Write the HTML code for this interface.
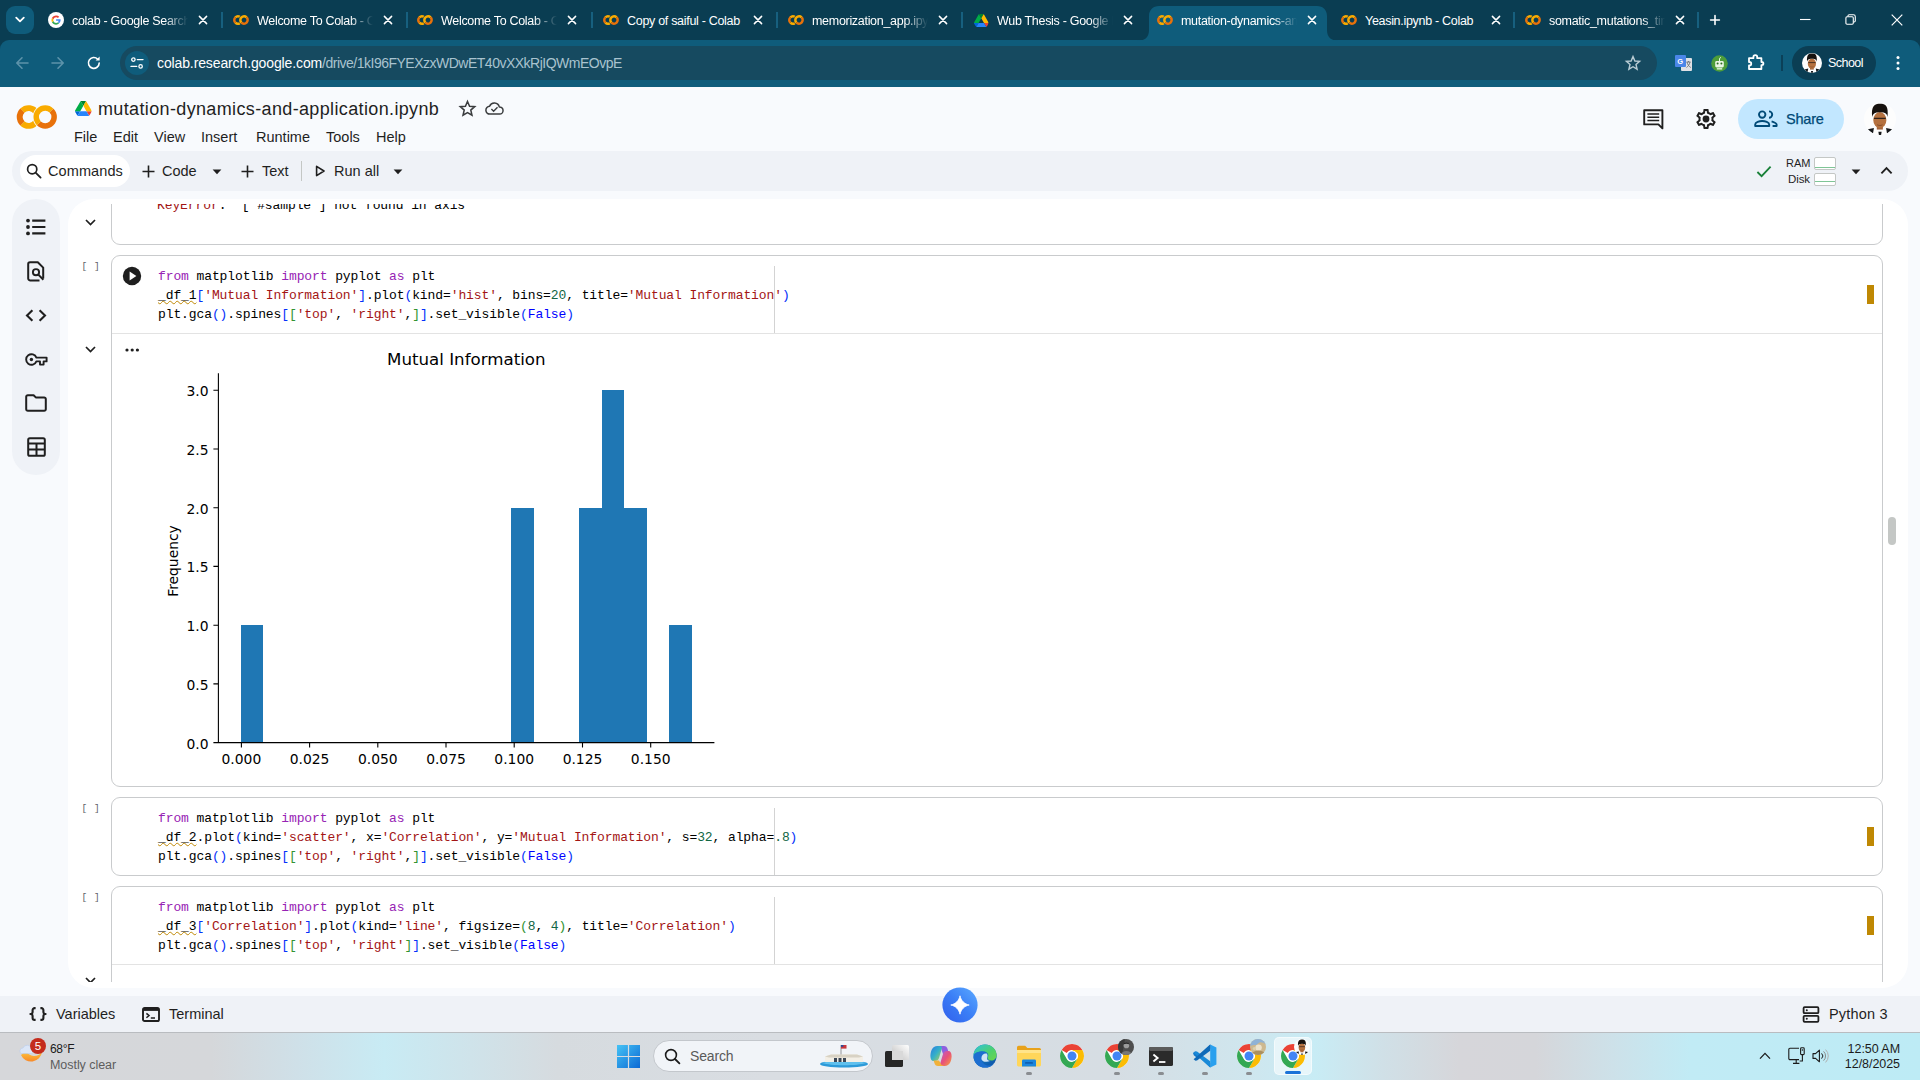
<!DOCTYPE html>
<html lang="en">
<head>
<meta charset="utf-8">
<title>mutation-dynamics-and-application.ipynb - Colab</title>
<style>
*{box-sizing:border-box;margin:0;padding:0}
html,body{width:1920px;height:1080px;overflow:hidden}
body{position:relative;background:#f8fafd;font-family:"Liberation Sans",sans-serif;color:#1f1f1f}
.abs{position:absolute}
svg{display:block;overflow:visible}
/* ---------- browser chrome ---------- */
#tabstrip{position:absolute;left:0;top:0;width:1920px;height:60px;background:#0a3d52}
#navbar{position:absolute;left:0;top:40px;width:1920px;height:47px;background:#0f5c7b;border-radius:9px 9px 0 0}
.tab{position:absolute;top:0;height:40px;color:#fff;font-size:12.5px;letter-spacing:-0.3px}
.tab .fav{position:absolute;left:11px;top:12px;width:16px;height:16px}
.tab .tt{position:absolute;left:35px;top:13px;width:116px;height:16px;line-height:16px;white-space:nowrap;overflow:hidden;
  -webkit-mask-image:linear-gradient(90deg,#000 80%,transparent 100%);mask-image:linear-gradient(90deg,#000 80%,transparent 100%)}
.tab .x{position:absolute;left:160px;top:14px;width:12px;height:12px}
.tsep{position:absolute;top:12px;width:1.5px;height:16px;background:#17607f}
#omni{position:absolute;left:120px;top:46px;width:1537px;height:34px;border-radius:17px;background:#164a60}
#url{position:absolute;left:157px;top:54px;font-size:14px;line-height:18px;white-space:nowrap;color:#fff}
#url .p{color:#a9c3cf}
/* ---------- colab ---------- */
.menu{position:absolute;top:128px;font-size:14.5px;line-height:18px;color:#1f1f1f;white-space:nowrap}
#doctitle{position:absolute;left:98px;top:98px;font-size:18px;line-height:22px;letter-spacing:.36px;white-space:nowrap;color:#1f1f1f}
#ctool{position:absolute;left:12px;top:151px;width:1896px;height:40px;border-radius:20px;background:#eff2f7}
.tbtxt{position:absolute;font-size:14.5px;line-height:18px;top:162px;white-space:nowrap;color:#1f1f1f}
#side{position:absolute;left:12px;top:199px;width:48px;height:276px;border-radius:24px;background:#eff2f7}
#nb{position:absolute;left:68px;top:199px;width:1840px;height:789px;border-radius:26px;background:#fff;overflow:hidden}
#scroll{position:absolute;left:0;top:5px;width:1840px;height:778px;overflow:hidden}
.cell{position:absolute;left:43px;width:1772px;border:1px solid #c9cbcd;border-radius:9px;background:#fff}
.code{position:absolute;left:90px;font-family:"Liberation Mono",monospace;font-size:13px;letter-spacing:-0.1px;line-height:19px;white-space:pre;color:#000}
.k{color:#9723b4}.s{color:#a31515}.n{color:#116644}.b1{color:#0431fa}.b2{color:#319331}.b3{color:#7b3814}.f{color:#0000ff}
.sq{text-decoration:underline wavy #bf8803;text-decoration-thickness:1px;text-underline-offset:1px;text-decoration-skip-ink:none}
.ruler{position:absolute;left:706px;width:1px;background:#d3d3d3}
.mark{position:absolute;left:1799px;width:7px;height:19px;background:#bf8803}
.cnt{position:absolute;left:13.5px;font-family:"Liberation Mono",monospace;font-size:9.5px;letter-spacing:.5px;color:#5f6368;white-space:pre;margin-top:2px}
.hr{position:absolute;left:44px;width:1770px;height:1px;background:#e3e3e3}
/* chart */
.mt{font-family:"DejaVu Sans",sans-serif;fill:#000}
/* bottom */
#bbar{position:absolute;left:0;top:996px;width:1920px;height:36px;background:#eff2f7}
#task{position:absolute;left:0;top:1032px;width:1920px;height:48px;
 background:linear-gradient(90deg,#d6d7da 0%,#d5d7da 11%,#cfe0e8 15.5%,#c8ebf4 20%,#cfe3ea 24.5%,#d6dbdf 29%,#d9dde2 40%,#d6dde3 58%,#cfe6ee 65%,#c8ecf5 68.5%,#d0e0e7 72%,#d6d6da 76%,#d5d6da 80%,#cde1e9 84%,#c1ebf5 88%,#bdebf5 100%);border-top:1px solid #b9bcc0}
.tk{position:absolute;font-size:12px;line-height:15px;white-space:nowrap;color:#1b1b1b}
</style>
</head>
<body>
<!-- TABSTRIP -->
<div id="tabstrip"></div>
<div id="navbar"></div>
<!--CHROME_START-->
<!-- tab search -->
<div class="abs" style="left:6px;top:6px;width:28px;height:28px;border-radius:9px;background:#0f5c7b"></div>
<svg class="abs" style="left:14px;top:15px" width="12" height="10" viewBox="0 0 12 10"><path d="M2.2 2.6 L6 6.4 L9.8 2.6" fill="none" stroke="#fff" stroke-width="1.8" stroke-linecap="round" stroke-linejoin="round"/></svg>
<!-- active tab shape -->
<svg class="abs" style="left:1137px;top:6px" width="202" height="35" viewBox="0 0 202 35"><path d="M0 35 C8 35 12 31 12 24 V10 C12 4 16 0 22 0 H180 C186 0 190 4 190 10 V24 C190 31 194 35 202 35 Z" fill="#0f5c7b"/></svg>
<svg width="0" height="0" style="position:absolute">
 <defs>
  <symbol id="co" viewBox="0 0 16 16"><g fill="none" stroke-width="2.5"><path d="M6.76 4.69 A3.75 3.75 0 0 0 2.35 5.35" stroke="#f9ab00"/><path d="M2.35 10.65 A3.75 3.75 0 0 0 6.76 11.31" stroke="#f9ab00"/><path d="M2.4 5.3 A3.75 3.75 0 0 0 2.4 10.7" stroke="#e8710a"/><path d="M13.65 5.35 A3.75 3.75 0 0 0 8.35 10.65" stroke="#f9ab00"/><path d="M13.65 5.35 A3.75 3.75 0 0 1 8.35 10.65" stroke="#e8710a"/></g></symbol>
  <symbol id="ava" viewBox="0 0 20 20"><clipPath id="cpv"><circle cx="10" cy="10" r="10"/></clipPath><g clip-path="url(#cpv)"><rect width="20" height="20" fill="#fdfdfd"/><path d="M2.4 16.4 L6.2 15.6 L5.6 19.2 Z" fill="#15171a"/><path d="M17.6 16.4 L13.8 15.6 L14.4 19.2 Z" fill="#15171a"/><path d="M9 18 H11 L10.7 20 H9.3 Z" fill="#15171a"/><rect x="8" y="13" width="3.8" height="3.6" fill="#a5653b"/><ellipse cx="9.9" cy="10.7" rx="4.1" ry="5" fill="#b5713f"/><path d="M5.1 8.8 C4.4 2 6.6 .5 10 .5 C13.6 .5 15.4 2 14.7 8.8 C14.4 6.8 13.6 5.8 10 5.8 C6.4 5.8 5.6 6.8 5.1 8.8 Z" fill="#17120f"/><path d="M6.2 9.6 H13.6" stroke="#2f2018" stroke-width=".8"/><path d="M8.2 13.6 C9.4 14.2 10.4 14.2 11.6 13.6" stroke="#7a4526" stroke-width=".5" fill="none"/></g></symbol>
  <symbol id="tx" viewBox="0 0 12 12"><path d="M2.4 2.4 L9.6 9.6 M9.6 2.4 L2.4 9.6" stroke="#fff" stroke-width="1.5" stroke-linecap="round"/></symbol>
  <symbol id="drive" viewBox="0 0 87.3 78"><path d="m6.6 66.85 3.85 6.65c.8 1.4 1.95 2.5 3.3 3.3l13.75-23.8h-27.5c0 1.55.4 3.1 1.2 4.5z" fill="#0066da"/><path d="m43.65 25-13.75-23.8c-1.35.8-2.5 1.9-3.3 3.3l-25.4 44a9.06 9.06 0 0 0 -1.2 4.5h27.5z" fill="#00ac47"/><path d="m73.55 76.8c1.35-.8 2.5-1.9 3.3-3.3l1.6-2.75 7.65-13.25c.8-1.4 1.2-2.95 1.2-4.5h-27.502l5.852 11.5z" fill="#ea4335"/><path d="m43.65 25 13.75-23.8c-1.35-.8-2.9-1.2-4.5-1.2h-18.5c-1.6 0-3.15.45-4.5 1.2z" fill="#00832d"/><path d="m59.8 53h-32.3l-13.75 23.8c1.35.8 2.9 1.2 4.5 1.2h50.8c1.6 0 3.15-.45 4.5-1.2z" fill="#2684fc"/><path d="m73.4 26.5-12.7-22c-.8-1.4-1.95-2.5-3.3-3.3l-13.75 23.8 16.15 28h27.45c0-1.55-.4-3.1-1.2-4.5z" fill="#ffba00"/></symbol>
 </defs>
</svg>
<!-- tabs -->
<div class="tab" style="left:37px"><svg class="fav" viewBox="0 0 16 16"><circle cx="8" cy="8" r="8" fill="#fff"/><path d="M12.6 8.1c0-.35-.03-.6-.09-.87H8.1v1.6h2.56c-.05.4-.33 1-.95 1.4l1.45 1.13c.87-.8 1.44-1.98 1.44-3.26z" fill="#4285f4"/><path d="M8.1 12.7c1.25 0 2.3-.41 3.06-1.12L9.7 10.45c-.39.27-.91.46-1.6.46-1.22 0-2.26-.8-2.63-1.92l-1.5 1.16c.76 1.5 2.32 2.55 4.13 2.55z" fill="#34a853"/><path d="M5.47 9c-.1-.29-.15-.6-.15-.92s.06-.63.15-.92L3.96 6c-.31.63-.49 1.33-.49 2.08s.18 1.45.49 2.08z" fill="#fbbc05"/><path d="M8.1 5.26c.87 0 1.46.38 1.8.69l1.3-1.27C10.4 3.93 9.35 3.47 8.1 3.47c-1.8 0-3.37 1.04-4.13 2.55l1.5 1.16c.38-1.12 1.42-1.92 2.63-1.92z" fill="#ea4335"/></svg><div class="tt">colab - Google Search</div><svg class="x"><use href="#tx"/></svg></div>
<div class="tsep" style="left:221px"></div>
<div class="tab" style="left:222px"><svg class="fav"><use href="#co"/></svg><div class="tt">Welcome To Colab - Colab</div><svg class="x"><use href="#tx"/></svg></div>
<div class="tsep" style="left:406px"></div>
<div class="tab" style="left:406px"><svg class="fav"><use href="#co"/></svg><div class="tt">Welcome To Colab - Colab</div><svg class="x"><use href="#tx"/></svg></div>
<div class="tsep" style="left:591px"></div>
<div class="tab" style="left:592px"><svg class="fav"><use href="#co"/></svg><div class="tt" style="-webkit-mask-image:none;mask-image:none">Copy of saiful - Colab</div><svg class="x"><use href="#tx"/></svg></div>
<div class="tsep" style="left:776px"></div>
<div class="tab" style="left:777px"><svg class="fav"><use href="#co"/></svg><div class="tt">memorization_app.ipynb - Colab</div><svg class="x"><use href="#tx"/></svg></div>
<div class="tsep" style="left:961px"></div>
<div class="tab" style="left:962px"><svg class="fav" style="left:11.7px;top:13.7px;width:14.6px;height:13.2px"><use href="#drive"/></svg><div class="tt">Wub Thesis - Google Drive</div><svg class="x"><use href="#tx"/></svg></div>
<div class="tab" style="left:1146px"><svg class="fav"><use href="#co"/></svg><div class="tt">mutation-dynamics-and-application.ipynb - Colab</div><svg class="x"><use href="#tx"/></svg></div>
<div class="tab" style="left:1330px"><svg class="fav"><use href="#co"/></svg><div class="tt" style="-webkit-mask-image:none;mask-image:none">Yeasin.ipynb - Colab</div><svg class="x"><use href="#tx"/></svg></div>
<div class="tsep" style="left:1513px"></div>
<div class="tab" style="left:1514px"><svg class="fav"><use href="#co"/></svg><div class="tt">somatic_mutations_timeline.ipynb - Colab</div><svg class="x"><use href="#tx"/></svg></div>
<div class="tsep" style="left:1697px"></div>
<!-- new tab + -->
<svg class="abs" style="left:1709px;top:14px" width="12" height="12" viewBox="0 0 12 12"><path d="M6 1.6 V10.4 M1.6 6 H10.4" stroke="#fff" stroke-width="1.6" stroke-linecap="round"/></svg>
<!-- window controls -->
<svg class="abs" style="left:1800px;top:14px" width="11" height="11" viewBox="0 0 11 11"><path d="M0 5.5 H10.5" stroke="#fff" stroke-width="1.1"/></svg>
<svg class="abs" style="left:1845px;top:14px" width="11" height="11" viewBox="0 0 11 11"><rect x=".9" y="2.8" width="7.4" height="7.4" rx="1.1" fill="none" stroke="#fff" stroke-width="1.1"/><path d="M2.9 2.6 V2 A1.3 1.3 0 0 1 4.2 .8 H8.4 A1.9 1.9 0 0 1 10.3 2.7 V6.8 A1.2 1.2 0 0 1 9.1 8 H8.6" fill="none" stroke="#fff" stroke-width="1.1"/></svg>
<svg class="abs" style="left:1891px;top:14px" width="12" height="12" viewBox="0 0 12 12"><path d="M.7 .7 L11.3 11.3 M11.3 .7 L.7 11.3" stroke="#fff" stroke-width="1.2"/></svg>
<!-- nav buttons -->
<svg class="abs" style="left:15px;top:56px" width="14" height="14" viewBox="0 0 14 14"><path d="M13 7 H2 M7 1.8 L1.8 7 L7 12.2" fill="none" stroke="#5d93aa" stroke-width="1.6" stroke-linecap="round" stroke-linejoin="round"/></svg>
<svg class="abs" style="left:51px;top:56px" width="14" height="14" viewBox="0 0 14 14"><path d="M1 7 H12 M7 1.8 L12.2 7 L7 12.2" fill="none" stroke="#5d93aa" stroke-width="1.6" stroke-linecap="round" stroke-linejoin="round"/></svg>
<svg class="abs" style="left:86px;top:55px" width="16" height="16" viewBox="0 0 16 16"><path d="M13.2 8 A5.4 5.4 0 1 1 11.7 4.2" fill="none" stroke="#fff" stroke-width="1.6" stroke-linecap="round"/><path d="M13.6 1.6 V5.6 H9.6 Z" fill="#fff"/></svg>
<div id="omni"></div>
<div class="abs" style="left:125px;top:51px;width:24px;height:24px;border-radius:12px;background:#0f5c7b"></div>
<svg class="abs" style="left:130px;top:56px" width="14" height="14" viewBox="0 0 14 14"><circle cx="3.4" cy="3.6" r="1.7" fill="none" stroke="#fff" stroke-width="1.3"/><path d="M7.3 3.6 H13" stroke="#fff" stroke-width="1.4" stroke-linecap="round"/><circle cx="10.6" cy="10.4" r="1.7" fill="none" stroke="#fff" stroke-width="1.3"/><path d="M1 10.4 H6.7" stroke="#fff" stroke-width="1.4" stroke-linecap="round"/></svg>
<div id="url"><span style="letter-spacing:-.12px">colab.research.google.com</span><span class="p" style="letter-spacing:-.5px">/drive/1kI96FYEXzxWDwET40vXXkRjIQWmEOvpE</span></div>
<!-- star -->
<svg class="abs" style="left:1625px;top:55px" width="16" height="16" viewBox="0 0 16 16"><path d="M8 1.6 L9.9 6 L14.6 6.4 L11 9.5 L12.1 14.2 L8 11.7 L3.9 14.2 L5 9.5 L1.4 6.4 L6.1 6 Z" fill="none" stroke="#b9ccd4" stroke-width="1.4" stroke-linejoin="miter"/></svg>
<!-- translate ext -->
<svg class="abs" style="left:1675px;top:55px" width="17" height="17" viewBox="0 0 17 17"><rect x="6" y="3" width="11" height="13" rx="1" fill="#dfe1e5"/><rect x="0" y="0" width="11" height="12" rx="1" fill="#4a86e8"/><text x="2.2" y="8.6" font-family="Liberation Sans,sans-serif" font-size="7.5" font-weight="700" fill="#fff">G</text><path d="M11.5 7 H15.5 M13.5 6 V7 M12 7 C12.5 9.5 14 11.5 15.8 12.5 M15 7 C14.5 9.5 13 11.5 11.5 12.5" stroke="#6b7075" stroke-width=".9" fill="none"/></svg>
<!-- green robot ext -->
<svg class="abs" style="left:1711px;top:55px" width="17" height="17" viewBox="0 0 17 17"><circle cx="8.5" cy="8.5" r="8.3" fill="#4d9d3a"/><rect x="4.2" y="6" width="8.6" height="6.4" rx="1.4" fill="#eaf6e4"/><circle cx="6.6" cy="8.6" r="1" fill="#2f6e22"/><circle cx="10.4" cy="8.6" r="1" fill="#2f6e22"/><path d="M8.5 6 V3.4 L10 2.4" stroke="#eaf6e4" stroke-width="1" fill="none"/><rect x="5.8" y="13" width="5.4" height="1.6" fill="#cfe9c5"/></svg>
<!-- extensions puzzle -->
<svg class="abs" style="left:1748px;top:54px" width="16" height="16" viewBox="0 0 16 16"><path d="M1 4.2 H5.4 V3 A1.9 1.9 0 0 1 9.2 3 V4.2 H13.4 V8 H13.8 A1.6 1.6 0 0 1 13.8 11.2 H13.4 V15 H1 V11.5 H1.5 A1.75 1.75 0 0 0 1.5 8 H1 Z" fill="none" stroke="#fff" stroke-width="1.8" stroke-linejoin="round"/></svg>
<div class="abs" style="left:1781px;top:55px;width:1.5px;height:16px;background:#0b4058"></div>
<!-- profile pill -->
<div class="abs" style="left:1792px;top:46px;width:84px;height:34px;border-radius:17px;background:#0b3e54"></div>
<svg class="abs" style="left:1802px;top:53px" width="20" height="20"><use href="#ava"/></svg>
<div class="abs" style="left:1828px;top:55px;font-size:12.5px;line-height:16px;color:#fff;letter-spacing:-.55px">School</div>
<svg class="abs" style="left:1896px;top:55px" width="4" height="16" viewBox="0 0 4 16"><circle cx="2" cy="2.5" r="1.5" fill="#fff"/><circle cx="2" cy="8" r="1.5" fill="#fff"/><circle cx="2" cy="13.5" r="1.5" fill="#fff"/></svg>
<!--CHROME_END-->
<!--HEAD_START-->
<!-- colab logo -->
<svg class="abs" style="left:10px;top:96px" width="60" height="44" viewBox="10 96 60 44"><g fill="none" stroke-width="5.9"><path d="M36.31 112.55 A8.9 8.9 0 0 0 22.31 110.71" stroke="#f9ab00"/><path d="M22.31 123.29 A8.9 8.9 0 0 0 36.31 121.45" stroke="#f9ab00"/><path d="M22.4 110.6 A8.9 8.9 0 0 0 22.4 123.4" stroke="#e8710a"/></g><circle cx="45.2" cy="117" r="12.5" fill="#f8fafd"/><g fill="none" stroke-width="5.5"><path d="M51.53 110.67 A8.95 8.95 0 0 0 38.87 123.33" stroke="#f9ab00"/><path d="M51.53 110.67 A8.95 8.95 0 0 1 38.87 123.33" stroke="#e8710a"/></g></svg>
<svg class="abs" style="left:74.5px;top:101px" width="16.7" height="15"><use href="#drive"/></svg>
<div id="doctitle">mutation-dynamics-and-application.ipynb</div>
<!-- star -->
<svg class="abs" style="left:458.6px;top:100.4px" width="17" height="17" viewBox="0 0 16 16"><path d="M8 1.4 L9.95 5.9 L14.8 6.3 L11.1 9.5 L12.2 14.3 L8 11.8 L3.8 14.3 L4.9 9.5 L1.2 6.3 L6.05 5.9 Z" fill="none" stroke="#3a3c3e" stroke-width="1.45" stroke-linejoin="miter"/></svg>
<!-- cloud done -->
<svg class="abs" style="left:485.4px;top:101.4px" width="19" height="14.6" viewBox="0 0 19 14"><path d="M5 12.8 A3.9 3.9 0 0 1 4.6 5 A5.1 5.1 0 0 1 14.3 5.6 A3.6 3.6 0 0 1 14.6 12.8 Z" fill="none" stroke="#3a3c3e" stroke-width="1.5" stroke-linejoin="round"/><path d="M6.4 7.8 L8.6 9.9 L12.5 6" fill="none" stroke="#3a3c3e" stroke-width="1.4"/></svg>
<div class="menu" style="left:74px">File</div>
<div class="menu" style="left:113px">Edit</div>
<div class="menu" style="left:154px">View</div>
<div class="menu" style="left:201px">Insert</div>
<div class="menu" style="left:256px">Runtime</div>
<div class="menu" style="left:326px">Tools</div>
<div class="menu" style="left:376px">Help</div>
<!-- right header -->
<svg class="abs" style="left:1643px;top:109px" width="21" height="21" viewBox="0 0 21 21"><path d="M1.2 1.2 H19.4 V19.4 L15.4 15.4 H1.2 Z" fill="none" stroke="#1f1f1f" stroke-width="1.9" stroke-linejoin="round"/><path d="M4.4 5 H16.2 M4.4 8.2 H16.2 M4.4 11.4 H16.2" stroke="#1f1f1f" stroke-width="1.5"/></svg>
<svg class="abs" style="left:1694px;top:107px" width="24" height="24" viewBox="0 0 24 24"><path d="M19.43 12.98c.04-.32.07-.64.07-.98s-.03-.66-.07-.98l2.11-1.65c.19-.15.24-.42.12-.64l-2-3.46c-.12-.22-.39-.3-.61-.22l-2.49 1c-.52-.4-1.08-.73-1.69-.98l-.38-2.65C14.46 2.18 14.25 2 14 2h-4c-.25 0-.46.18-.49.42l-.38 2.65c-.61.25-1.17.59-1.69.98l-2.49-1c-.23-.09-.49 0-.61.22l-2 3.46c-.13.22-.07.49.12.64l2.11 1.65c-.04.32-.07.65-.07.98s.03.66.07.98l-2.11 1.65c-.19.15-.24.42-.12.64l2 3.46c.12.22.39.3.61.22l2.49-1c.52.4 1.08.73 1.69.98l.38 2.65c.03.24.24.42.49.42h4c.25 0 .46-.18.49-.42l.38-2.65c.61-.25 1.17-.59 1.69-.98l2.49 1c.23.09.49 0 .61-.22l2-3.46c.12-.22.07-.49-.12-.64l-2.11-1.65zm-1.98-1.71c.04.31.05.52.05.73 0 .21-.02.43-.05.73l-.14 1.13.89.7 1.08.84-.7 1.21-1.27-.51-1.04-.42-.9.68c-.43.32-.84.56-1.25.73l-1.06.43-.16 1.13-.2 1.35h-1.4l-.19-1.35-.16-1.13-1.06-.43c-.43-.18-.83-.41-1.23-.71l-.91-.7-1.06.43-1.27.51-.7-1.21 1.08-.84.89-.7-.14-1.13c-.03-.31-.05-.54-.05-.74s.02-.43.05-.73l.14-1.13-.89-.7-1.08-.84.7-1.21 1.27.51 1.04.42.9-.68c.43-.32.84-.56 1.25-.73l1.06-.43.16-1.13.2-1.35h1.39l.19 1.35.16 1.13 1.06.43c.43.18.83.41 1.23.71l.91.7 1.06-.43 1.27-.51.7 1.21-1.07.85-.89.7.14 1.13z" fill="#1f1f1f"/><circle cx="12" cy="12" r="3.4" fill="#1f1f1f"/></svg>
<div class="abs" style="left:1738px;top:99px;width:106px;height:40px;border-radius:20px;background:#c2e7ff"></div>
<svg class="abs" style="left:1754px;top:110px" width="24" height="18" viewBox="0 0 24 18"><circle cx="8.2" cy="4.6" r="3.2" fill="none" stroke="#004a77" stroke-width="1.9"/><path d="M1.2 16 V14.6 C1.2 12.2 5.4 11 8.2 11 C11 11 15.2 12.2 15.2 14.6 V16 Z" fill="none" stroke="#004a77" stroke-width="1.9" stroke-linejoin="round"/><path d="M15 1.4 A3.2 3.2 0 0 1 15 7.8 M17.6 11.3 C19.6 11.9 22.6 12.9 22.6 14.6 V16 H18.6" fill="none" stroke="#004a77" stroke-width="1.9" stroke-linejoin="round"/></svg>
<div class="abs" style="left:1786px;top:110px;font-size:14.5px;line-height:18px;color:#004a77;-webkit-text-stroke:.25px #004a77;letter-spacing:-.2px">Share</div>
<!-- avatar -->
<svg class="abs" style="left:1864px;top:103px" width="32" height="32"><use href="#ava"/></svg>
<!-- colab toolbar -->
<div id="ctool"></div>
<div class="abs" style="left:20px;top:155px;width:110px;height:32px;border-radius:16px;background:#fff"></div>
<svg class="abs" style="left:26px;top:163px" width="16" height="16" viewBox="0 0 16 16"><circle cx="6.2" cy="6.2" r="4.6" fill="none" stroke="#1f1f1f" stroke-width="1.7"/><path d="M9.6 9.6 L14.6 14.6" stroke="#1f1f1f" stroke-width="1.8" stroke-linecap="round"/></svg>
<div class="tbtxt" style="left:48px;letter-spacing:.1px">Commands</div>
<svg class="abs" style="left:142px;top:165px" width="13" height="13" viewBox="0 0 13 13"><path d="M6.5 .5 V12.5 M.5 6.5 H12.5" stroke="#1f1f1f" stroke-width="1.6"/></svg>
<div class="tbtxt" style="left:162px">Code</div>
<svg class="abs" style="left:212px;top:169px" width="10" height="6" viewBox="0 0 10 6"><path d="M.6 .6 H9.4 L5 5.2 Z" fill="#1f1f1f"/></svg>
<svg class="abs" style="left:241px;top:165px" width="13" height="13" viewBox="0 0 13 13"><path d="M6.5 .5 V12.5 M.5 6.5 H12.5" stroke="#1f1f1f" stroke-width="1.6"/></svg>
<div class="tbtxt" style="left:262px">Text</div>
<div class="abs" style="left:301px;top:161px;width:1px;height:20px;background:#c4c7c5"></div>
<svg class="abs" style="left:315px;top:164px" width="11" height="14" viewBox="0 0 11 14"><path d="M1.6 2.4 L9 7 L1.6 11.6 Z" fill="none" stroke="#1f1f1f" stroke-width="1.6" stroke-linejoin="round"/></svg>
<div class="tbtxt" style="left:334px">Run all</div>
<svg class="abs" style="left:393px;top:169px" width="10" height="6" viewBox="0 0 10 6"><path d="M.6 .6 H9.4 L5 5.2 Z" fill="#1f1f1f"/></svg>
<!-- right of toolbar -->
<svg class="abs" style="left:1756px;top:165px" width="16" height="13" viewBox="0 0 16 13"><path d="M1.4 7 L5.6 11.2 L14.6 1.6" fill="none" stroke="#188038" stroke-width="1.8"/></svg>
<div class="abs" style="left:1786px;top:157px;font-size:11px;line-height:13px;color:#1f1f1f">RAM</div>
<div class="abs" style="left:1788px;top:173px;font-size:11.5px;line-height:13px;color:#1f1f1f;letter-spacing:-.1px">Disk</div>
<div class="abs" style="left:1814px;top:157px;width:22px;height:13px;border:1px solid #c4c7c5;border-radius:2px;background:#fff"><div style="position:absolute;left:0;right:0;bottom:1px;height:1.5px;background:#7fc596"></div></div>
<div class="abs" style="left:1814px;top:173px;width:22px;height:13px;border:1px solid #c4c7c5;border-radius:2px;background:#fff"><div style="position:absolute;left:0;right:0;bottom:3px;height:1.5px;background:#7fc596"></div></div>
<svg class="abs" style="left:1851px;top:169px" width="10" height="6" viewBox="0 0 10 6"><path d="M.6 .6 H9.4 L5 5.2 Z" fill="#1f1f1f"/></svg>
<svg class="abs" style="left:1880px;top:166px" width="13" height="9" viewBox="0 0 13 9"><path d="M1.4 7.4 L6.5 2.2 L11.6 7.4" fill="none" stroke="#1f1f1f" stroke-width="1.9"/></svg>
<!--HEAD_END-->
<!--SIDE_START-->
<div id="side"></div>
<!-- toc -->
<svg class="abs" style="left:26px;top:218px" width="20" height="18" viewBox="0 0 20 18"><circle cx="2" cy="2.6" r="1.9" fill="#1f1f1f"/><circle cx="2" cy="9" r="1.9" fill="#1f1f1f"/><circle cx="2" cy="15.4" r="1.9" fill="#1f1f1f"/><path d="M6.2 2.6 H19.4 M6.2 9 H19.4 M6.2 15.4 H19.4" stroke="#1f1f1f" stroke-width="2.2"/></svg>
<!-- find in page -->
<svg class="abs" style="left:27px;top:261px" width="18" height="21" viewBox="0 0 18 21"><path d="M16.2 17.5 V6.6 L10.8 1.2 H3 A1.8 1.8 0 0 0 1.2 3 V17.6 A1.8 1.8 0 0 0 3 19.4 H12.5" fill="none" stroke="#1f1f1f" stroke-width="2" stroke-linejoin="round"/><circle cx="9" cy="11.2" r="3.1" fill="none" stroke="#1f1f1f" stroke-width="1.9"/><path d="M11.3 13.6 L16.4 18.8" stroke="#1f1f1f" stroke-width="2"/></svg>
<!-- code -->
<svg class="abs" style="left:25px;top:309px" width="22" height="13" viewBox="0 0 22 13"><path d="M7.4 1.2 L2 6.5 L7.4 11.8 M14.6 1.2 L20 6.5 L14.6 11.8" fill="none" stroke="#1f1f1f" stroke-width="2.1"/></svg>
<!-- key -->
<svg class="abs" style="left:25px;top:353px" width="23" height="13" viewBox="0 0 23 13"><path d="M11.4 4.6 A5.3 5.3 0 1 0 11.4 8.4 H15 V11.6 H18.6 V8.4 H21.6 V4.6 Z" fill="none" stroke="#1f1f1f" stroke-width="1.9" stroke-linejoin="round"/><circle cx="6.4" cy="6.5" r="1.7" fill="#1f1f1f"/></svg>
<!-- folder -->
<svg class="abs" style="left:25px;top:394px" width="22" height="18" viewBox="0 0 22 18"><path d="M2.8 1.2 H8.6 L10.8 3.4 H19.2 A1.6 1.6 0 0 1 20.8 5 V15.2 A1.6 1.6 0 0 1 19.2 16.8 H2.8 A1.6 1.6 0 0 1 1.2 15.2 V2.8 A1.6 1.6 0 0 1 2.8 1.2 Z" fill="none" stroke="#1f1f1f" stroke-width="2" stroke-linejoin="round"/></svg>
<!-- table -->
<svg class="abs" style="left:27px;top:437px" width="19" height="20" viewBox="0 0 19 20"><rect x="1.2" y="1.2" width="16.6" height="17.6" rx="1.6" fill="none" stroke="#1f1f1f" stroke-width="2"/><path d="M1.2 6.6 H17.8 M1.2 12.6 H17.8 M9.5 6.6 V18.8" stroke="#1f1f1f" stroke-width="2"/></svg>
<!--SIDE_END-->
<!--NB_START-->
<div id="nb"><div id="scroll">
<!-- cell 0 (tail of previous output) -->
<div class="cell" style="top:-40px;height:81px"></div>
<div class="code" style="top:-8px;left:89px"><span class="s">KeyError</span>: "['#sample'] not found in axis"</div>
<svg class="abs" style="left:17px;top:15px" width="11" height="7" viewBox="0 0 11 7"><path d="M1 1 L5.5 5.6 L10 1" fill="none" stroke="#1f1f1f" stroke-width="1.7"/></svg>
<!-- cell 1 -->
<div class="cnt" style="top:55px">[ ]</div>
<div class="cell" style="top:51px;height:532px"></div>
<svg class="abs" style="left:54px;top:62px" width="20" height="20" viewBox="0 0 20 20"><circle cx="10" cy="10" r="9.2" fill="#1f1f1f"/><path d="M7.6 5.6 L14.4 10 L7.6 14.4 Z" fill="#fff"/></svg>
<div class="code" style="top:63px"><span class="k">from</span> matplotlib <span class="k">import</span> pyplot <span class="k">as</span> plt
<span class="sq">_df_1</span><span class="b1">[</span><span class="s">'Mutual Information'</span><span class="b1">]</span>.plot<span class="b1">(</span>kind=<span class="s">'hist'</span>, bins=<span class="n">20</span>, title=<span class="s">'Mutual Information'</span><span class="b1">)</span>
plt.gca<span class="b1">()</span>.spines<span class="b1">[</span><span class="b2">[</span><span class="s">'top'</span>, <span class="s">'right'</span>,<span class="b2">]</span><span class="b1">]</span>.set_visible<span class="b1">(</span><span class="f">False</span><span class="b1">)</span></div>
<div class="ruler" style="top:62px;height:67px"></div>
<div class="mark" style="top:81px"></div>
<div class="hr" style="top:129px"></div>
<svg class="abs" style="left:17px;top:142px" width="11" height="7" viewBox="0 0 11 7"><path d="M1 1 L5.5 5.6 L10 1" fill="none" stroke="#1f1f1f" stroke-width="1.7"/></svg>
<svg class="abs" style="left:57px;top:144px" width="15" height="4" viewBox="0 0 15 4"><circle cx="2" cy="2" r="1.6" fill="#1f1f1f"/><circle cx="7.2" cy="2" r="1.6" fill="#1f1f1f"/><circle cx="12.4" cy="2" r="1.6" fill="#1f1f1f"/></svg>
<!-- chart: absolute page coordinates via viewBox -->
<svg class="abs" style="left:0;top:0" width="1840" height="778" viewBox="68 204 1840 778">
 <g fill="#1f77b4" shape-rendering="crispEdges">
  <rect x="241" y="625.2" width="22.2" height="117.3"/>
  <rect x="511.4" y="507.7" width="22.6" height="234.8"/>
  <rect x="579.2" y="507.7" width="68" height="234.8"/>
  <rect x="601.8" y="390.2" width="22.4" height="120"/>
  <rect x="669.4" y="625.2" width="22.7" height="117.3"/>
 </g>
 <g stroke="#000" stroke-width="1.1" fill="none">
  <path d="M218.4 373.3 V743"/>
  <path d="M217.9 742.6 H714.4"/>
  <path d="M213.4 742.6 H218 M213.4 683.9 H218 M213.4 625.2 H218 M213.4 566.4 H218 M213.4 507.7 H218 M213.4 449 H218 M213.4 390.2 H218"/>
  <path d="M241.4 743 V747.6 M309.6 743 V747.6 M377.8 743 V747.6 M446 743 V747.6 M514.2 743 V747.6 M582.5 743 V747.6 M650.7 743 V747.6"/>
 </g>
 <g class="mt" font-size="13.89" text-anchor="end">
  <text x="208.6" y="748.5">0.0</text><text x="208.6" y="689.8">0.5</text><text x="208.6" y="631.1">1.0</text><text x="208.6" y="572.3">1.5</text><text x="208.6" y="513.6">2.0</text><text x="208.6" y="454.9">2.5</text><text x="208.6" y="396.1">3.0</text>
 </g>
 <g class="mt" font-size="13.89" text-anchor="middle">
  <text x="241.4" y="763.8">0.000</text><text x="309.6" y="763.8">0.025</text><text x="377.8" y="763.8">0.050</text><text x="446" y="763.8">0.075</text><text x="514.2" y="763.8">0.100</text><text x="582.5" y="763.8">0.125</text><text x="650.7" y="763.8">0.150</text>
 </g>
 <text class="mt" font-size="16.67" text-anchor="middle" x="466.3" y="364.6">Mutual Information</text>
 <text class="mt" font-size="13.89" text-anchor="middle" transform="translate(178.3 561) rotate(-90)">Frequency</text>
</svg>
<!-- cell 2 -->
<div class="cnt" style="top:597px">[ ]</div>
<div class="cell" style="top:593px;height:79px"></div>
<div class="code" style="top:605px"><span class="k">from</span> matplotlib <span class="k">import</span> pyplot <span class="k">as</span> plt
<span class="sq">_df_2</span>.plot<span class="b1">(</span>kind=<span class="s">'scatter'</span>, x=<span class="s">'Correlation'</span>, y=<span class="s">'Mutual Information'</span>, s=<span class="n">32</span>, alpha=<span class="n">.8</span><span class="b1">)</span>
plt.gca<span class="b1">()</span>.spines<span class="b1">[</span><span class="b2">[</span><span class="s">'top'</span>, <span class="s">'right'</span>,<span class="b2">]</span><span class="b1">]</span>.set_visible<span class="b1">(</span><span class="f">False</span><span class="b1">)</span></div>
<div class="ruler" style="top:604px;height:67px"></div>
<div class="mark" style="top:623px"></div>
<!-- cell 3 -->
<div class="cnt" style="top:686px">[ ]</div>
<div class="cell" style="top:682px;height:300px"></div>
<div class="code" style="top:694px"><span class="k">from</span> matplotlib <span class="k">import</span> pyplot <span class="k">as</span> plt
<span class="sq">_df_3</span><span class="b1">[</span><span class="s">'Correlation'</span><span class="b1">]</span>.plot<span class="b1">(</span>kind=<span class="s">'line'</span>, figsize=<span class="b2">(</span><span class="n">8</span>, <span class="n">4</span><span class="b2">)</span>, title=<span class="s">'Correlation'</span><span class="b1">)</span>
plt.gca<span class="b1">()</span>.spines<span class="b1">[</span><span class="b2">[</span><span class="s">'top'</span>, <span class="s">'right'</span><span class="b2">]</span><span class="b1">]</span>.set_visible<span class="b1">(</span><span class="f">False</span><span class="b1">)</span></div>
<div class="ruler" style="top:693px;height:67px"></div>
<div class="mark" style="top:712px"></div>
<div class="hr" style="top:760px"></div>
<svg class="abs" style="left:17px;top:773px" width="11" height="7" viewBox="0 0 11 7"><path d="M1 1 L5.5 5.6 L10 1" fill="none" stroke="#1f1f1f" stroke-width="1.7"/></svg>
</div></div>
<!-- scrollbar thumb -->
<div class="abs" style="left:1888px;top:517px;width:8px;height:28px;border-radius:4px;background:#c4c7c5"></div>
<!--NB_END-->
<!--BOTTOM_START-->
<div id="bbar"></div>
<!-- gemini fab -->
<svg class="abs" style="left:942px;top:987px" width="36" height="36" viewBox="0 0 36 36"><defs><linearGradient id="gfab" x1="0" y1="1" x2="1" y2="0"><stop offset=".1" stop-color="#3365ee"/><stop offset=".5" stop-color="#3a7ef6"/><stop offset=".9" stop-color="#55a2fe"/></linearGradient></defs><circle cx="18" cy="18" r="17.6" fill="url(#gfab)"/><path d="M18 8.8 C19 13.6 22.4 17 27.2 18 C22.4 19 19 22.4 18 27.2 C17 22.4 13.6 19 8.8 18 C13.6 17 17 13.6 18 8.8 Z" fill="#fff" stroke="#fff" stroke-width=".8" stroke-linejoin="round"/></svg>
<!-- variables -->
<svg class="abs" style="left:29px;top:1007px" width="18" height="14" viewBox="0 0 18 14"><path d="M6.6 1.1 H5.6 A2 2 0 0 0 3.6 3.1 V4.9 A2.1 2.1 0 0 1 1.4 7 A2.1 2.1 0 0 1 3.6 9.1 V10.9 A2 2 0 0 0 5.6 12.9 H6.6 M11.4 1.1 H12.4 A2 2 0 0 1 14.4 3.1 V4.9 A2.1 2.1 0 0 0 16.6 7 A2.1 2.1 0 0 0 14.4 9.1 V10.9 A2 2 0 0 1 12.4 12.9 H11.4" fill="none" stroke="#1f1f1f" stroke-width="2.1" stroke-linejoin="round"/></svg>
<div class="tbtxt" style="left:56px;top:1005px">Variables</div>
<svg class="abs" style="left:142px;top:1007px" width="18" height="15" viewBox="0 0 18 15"><rect x="1" y="1" width="16" height="13" rx="1.6" fill="none" stroke="#1f1f1f" stroke-width="1.9"/><path d="M1 2.6 H17" stroke="#1f1f1f" stroke-width="2.6"/><path d="M4.4 6.4 L7 8.6 L4.4 10.8 M8.8 11 H13" fill="none" stroke="#1f1f1f" stroke-width="1.5"/></svg>
<div class="tbtxt" style="left:169px;top:1005px">Terminal</div>
<svg class="abs" style="left:1802px;top:1006px" width="18" height="17" viewBox="0 0 18 17"><rect x="1.6" y="1.2" width="14.8" height="6" rx="1" fill="none" stroke="#1f1f1f" stroke-width="1.8"/><rect x="1.6" y="9.8" width="14.8" height="6" rx="1" fill="none" stroke="#1f1f1f" stroke-width="1.8"/><circle cx="4.8" cy="4.2" r="1" fill="#1f1f1f"/><circle cx="4.8" cy="12.8" r="1" fill="#1f1f1f"/></svg>
<div class="tbtxt" style="left:1829px;top:1005px;letter-spacing:.2px">Python 3</div>
<!--BOTTOM_END-->
<!--TASK_START-->
<div id="task"></div>
<!-- weather -->
<svg class="abs" style="left:18px;top:1042px" width="28" height="26" viewBox="0 0 28 26"><defs><linearGradient id="moon" x1="0" y1="0" x2="0" y2="1"><stop offset="0" stop-color="#ffc83d"/><stop offset="1" stop-color="#f7892b"/></linearGradient></defs><path d="M3 13 A11 11 0 0 0 24 10 A9.5 9.5 0 0 1 8 9 Z" fill="url(#moon)"/><path d="M3.4 11.6 A3 3 0 0 1 5 6 A4.6 4.6 0 0 1 13.6 6.4 A2.8 2.8 0 0 1 13.4 11.6 Z" fill="#dbe6f7" stroke="#b9cdee" stroke-width=".6"/></svg>
<div class="abs" style="left:30px;top:1038px;width:16px;height:16px;border-radius:8px;background:#c42b1c;color:#fff;font-size:11.5px;line-height:16px;text-align:center">5</div>
<div class="tk" style="left:50px;top:1042px;font-size:12px;letter-spacing:-.3px">68°F</div>
<div class="tk" style="left:50px;top:1058px;font-size:12.5px;color:#5d5d5d;letter-spacing:-.05px">Mostly clear</div>
<!-- windows logo -->
<svg class="abs" style="left:617px;top:1045px" width="23" height="23" viewBox="0 0 23 23"><defs><linearGradient id="wl" x1="0" y1="0" x2="1" y2="1"><stop offset="0" stop-color="#45c3f5"/><stop offset="1" stop-color="#0b68d4"/></linearGradient></defs><path d="M0 0 H10.9 V10.9 H0 Z M12.1 0 H23 V10.9 H12.1 Z M0 12.1 H10.9 V23 H0 Z M12.1 12.1 H23 V23 H12.1 Z" fill="url(#wl)"/></svg>
<!-- search pill -->
<div class="abs" style="left:653px;top:1040px;width:220px;height:32px;border-radius:16px;background:#f1f4f8;border:1px solid #c3c7cc"></div>
<svg class="abs" style="left:664px;top:1048px" width="17" height="17" viewBox="0 0 17 17"><circle cx="7" cy="7" r="5.4" fill="none" stroke="#1b1b1b" stroke-width="1.6"/><path d="M11 11 L15.4 15.4" stroke="#1b1b1b" stroke-width="1.8" stroke-linecap="round"/></svg>
<div class="abs" style="left:690px;top:1047px;font-size:14px;line-height:18px;color:#5a5a5a;letter-spacing:-.15px">Search</div>
<!-- ship / memorial illustration -->
<svg class="abs" style="left:819px;top:1043px" width="50" height="26" viewBox="0 0 50 26"><ellipse cx="25" cy="21" rx="24" ry="3.6" fill="#2d9ad8"/><path d="M3 20 C12 17 38 17 47 20 C38 23 12 23 3 20 Z" fill="#5fc0ee"/><path d="M6 19 V13.4 L12 11.4 H38 L44 13.4 V19 Z" fill="#f3efe6"/><path d="M6 13.4 L12 11.4 H38 L44 13.4 L40 14.4 H10 Z" fill="#d8d2c4"/><path d="M15 15 H18 V19 H15 Z M19.5 15 H22.5 V19 H19.5 Z M24 15 H27 V19 H24 Z" fill="#3b4656"/><path d="M22 11.4 V2" stroke="#7d7d7d" stroke-width=".8"/><path d="M22 2 H27.5 V5.6 H22 Z" fill="#c8363b"/><path d="M22 2 H24.4 V3.8 H22 Z" fill="#2b4a9a"/></svg>
<!-- task view -->
<svg class="abs" style="left:885px;top:1045px" width="24" height="23" viewBox="0 0 24 23"><defs><linearGradient id="tv" x1="0" y1="1" x2="1" y2="0"><stop offset="0" stop-color="#bcbcbc"/><stop offset="1" stop-color="#ffffff"/></linearGradient></defs><rect x="7" y="0" width="17" height="15" rx="1.6" fill="url(#tv)"/><rect x="0" y="6" width="18" height="16" rx="1.6" fill="#262626"/><rect x="7" y="6" width="11" height="9" fill="#d9d9d9"/></svg>
<!-- copilot -->
<svg class="abs" style="left:929px;top:1044px" width="24" height="24" viewBox="0 0 24 24"><defs><linearGradient id="cpa" x1="0" y1="0" x2="1" y2="1"><stop offset="0" stop-color="#2a7be4"/><stop offset=".5" stop-color="#34b0c9"/><stop offset="1" stop-color="#b7d44a"/></linearGradient><linearGradient id="cpb" x1="0" y1="0" x2="1" y2="1"><stop offset="0" stop-color="#b35bd6"/><stop offset=".5" stop-color="#e8517a"/><stop offset="1" stop-color="#f7a43a"/></linearGradient></defs><path d="M9 2 H15 C17 2 18 3 18.6 5 L20 10 H14 L12 4 C11.6 3 11 2.6 10 2.6 Z" fill="#8f5fe0"/><path d="M1.4 12 C1.4 8 3 2 8.4 2 H11 C12 2 12.6 2.6 13 4 L10 14 C9.4 16 8 17 6 17 H4.4 C2.6 17 1.4 15 1.4 12 Z" fill="url(#cpa)"/><path d="M22.6 12 C22.6 16 21 22 15.6 22 H13 C12 22 11.4 21.4 11 20 L14 10 C14.6 8 16 7 18 7 H19.6 C21.4 7 22.6 9 22.6 12 Z" fill="url(#cpb)"/><path d="M15 22 H9 C7 22 6 21 5.4 19 L4.6 16.6 H10 L12 20 C12.4 21 13 21.4 14 21.4 Z" fill="#f1b13a"/></svg>
<!-- edge -->
<svg class="abs" style="left:973px;top:1044px" width="24" height="24" viewBox="0 0 24 24"><defs><linearGradient id="eg1" x1="0" y1="0" x2="1" y2="1"><stop offset="0" stop-color="#2fc2df"/><stop offset=".6" stop-color="#4fd16a"/><stop offset="1" stop-color="#6fd64c"/></linearGradient><linearGradient id="eg2" x1="0" y1="0" x2="1" y2="1"><stop offset="0" stop-color="#1b8fd8"/><stop offset="1" stop-color="#0c4fa3"/></linearGradient></defs><circle cx="12" cy="12" r="11.6" fill="url(#eg2)"/><path d="M.6 10.4 C1.4 4.4 6.2 .4 12 .4 C18.6 .4 23.6 5.2 23.6 11 C23.6 14.4 21.2 16.6 18.4 16.6 C15.6 16.6 14.2 15.2 14.6 13.6 C15 12.4 15.4 12 15.2 10.8 C14.8 8.6 12.6 7.2 10 7.2 C5.6 7.2 1.8 9 .6 10.4 Z" fill="url(#eg1)"/><path d="M8.4 14.2 C8.4 18.6 12 21.4 15.6 21.6 C17.8 21.6 20 20.8 21.4 19.2 C19 22.4 15.6 23.6 12 23.6 C6 23.6 1.6 19.2 .6 14 C.2 11 3 7.4 8.6 7.4 C11 7.4 13 8.2 13.8 9.6 C11 9 8.4 10.8 8.4 14.2 Z" fill="#1d6ed0"/><path d="M8.4 14.2 C8.4 11 11 9 13.8 9.6 C14.6 10.8 14.8 12 14.2 13.4 C13.6 15 14.6 16.6 17 17 C14 18.6 8.4 18 8.4 14.2 Z" fill="#cfe4f4"/></svg>
<!-- explorer -->
<svg class="abs" style="left:1017px;top:1045px" width="24" height="22" viewBox="0 0 24 22"><path d="M0 2.4 A1.6 1.6 0 0 1 1.6 .8 H8.2 L10.4 3 H22.4 A1.6 1.6 0 0 1 24 4.6 V8 H0 Z" fill="#e8a21b"/><path d="M0 5 H24 V20 A1.4 1.4 0 0 1 22.6 21.4 H1.4 A1.4 1.4 0 0 1 0 20 Z" fill="#ffd65a"/><path d="M0 5 H24 V8 H0 Z" fill="#ffe48a"/><path d="M5 21.4 V16 A1.4 1.4 0 0 1 6.4 14.6 H17.6 A1.4 1.4 0 0 1 19 16 V21.4 Z" fill="#1a86dd"/><rect x="8" y="17" width="8" height="1.8" rx=".9" fill="#0f5fb0"/></svg>
<svg width="0" height="0" style="position:absolute"><defs>
 <symbol id="chrome" viewBox="0 0 24 24"><circle cx="12" cy="12" r="12" fill="#fff"/><path d="M12 0 A12 12 0 0 1 22.39 6 H12 A6 6 0 0 0 6.8 9 L1.61 6 A12 12 0 0 1 12 0 Z" fill="#ea4335"/><path d="M22.39 6 A12 12 0 0 1 12 24 L17.2 15 A6 6 0 0 0 17.2 9 L12 6 Z" fill="#fbbc04"/><path d="M12 24 A12 12 0 0 1 1.61 6 L6.8 15 A6 6 0 0 0 12 18 L17.2 15 Z" fill="#34a853"/><path d="M12 6 H22.39 L17.2 9 Z" fill="#fbbc04"/><circle cx="12" cy="12" r="5.6" fill="#fff"/><circle cx="12" cy="12" r="4.5" fill="#4285f4"/></symbol>
 <symbol id="dot" viewBox="0 0 6 3"><rect width="6" height="3" rx="1.5" fill="#8a8d91"/></symbol>
</defs></svg>
<svg class="abs" style="left:1026px;top:1072px" width="6" height="3"><use href="#dot"/></svg>
<!-- chrome 1 -->
<svg class="abs" style="left:1060px;top:1044px" width="24" height="24"><use href="#chrome"/></svg>
<!-- chrome 2 + avatar -->
<svg class="abs" style="left:1105px;top:1044px" width="24" height="24"><use href="#chrome"/></svg>
<svg class="abs" style="left:1118px;top:1039px" width="16" height="16" viewBox="0 0 16 16"><defs><clipPath id="cpA"><circle cx="8" cy="8" r="8"/></clipPath></defs><g clip-path="url(#cpA)"><rect width="16" height="16" fill="#4e4e4e"/><path d="M0 0 H7 L4 16 H0 Z" fill="#3a3a3a"/><circle cx="8.4" cy="6.4" r="2.8" fill="#9c9c9c"/><path d="M3 16 C3.4 10.6 13.4 10.6 14 16 Z" fill="#777"/><path d="M5.4 5.6 C5.8 2.6 11 2.6 11.4 5.6 C10 4.4 6.8 4.4 5.4 5.6 Z" fill="#262626"/></g></svg>
<svg class="abs" style="left:1114px;top:1072px" width="6" height="3"><use href="#dot"/></svg>
<!-- terminal -->
<svg class="abs" style="left:1149px;top:1047px" width="24" height="19" viewBox="0 0 24 19"><rect width="24" height="19" rx="1.6" fill="#2b2b2b"/><rect width="24" height="4" rx="1.4" fill="#5b5b5b"/><path d="M4.4 7.6 L8.6 11 L4.4 14.4" fill="none" stroke="#fff" stroke-width="1.9"/><path d="M10 15 H16.4" stroke="#fff" stroke-width="1.8"/></svg>
<svg class="abs" style="left:1158px;top:1072px" width="6" height="3"><use href="#dot"/></svg>
<!-- vscode -->
<svg class="abs" style="left:1193px;top:1044px" width="24" height="24" viewBox="0 0 24 24"><path d="M17.2 .6 L23.4 3.4 V20.6 L17.2 23.4 Z" fill="#2aa0ee"/><path d="M17.2 .6 L3.6 13.4 L.8 11.2 L0 9 L2 7.6 L17.2 19 V23.4 L5 12 L17.2 5 Z" fill="#1277c8"/><path d="M17.2 23.4 L.6 8.8 L2.4 7.2 L4 7.4 L17.2 17.2 Z" fill="#1a8ad8"/><path d="M17.2 .6 L.6 15.2 L2.4 16.8 L4 16.6 L17.2 6.8 Z" fill="#0f6ab8"/><path d="M17.2 6.8 L10.4 12 L17.2 17.2 Z" fill="#cfe6f8" opacity="0"/></svg>
<svg class="abs" style="left:1202px;top:1072px" width="6" height="3"><use href="#dot"/></svg>
<!-- chrome 3 + avatar -->
<svg class="abs" style="left:1237px;top:1044px" width="24" height="24"><use href="#chrome"/></svg>
<svg class="abs" style="left:1250px;top:1039px" width="16" height="16" viewBox="0 0 16 16"><defs><clipPath id="cpB"><circle cx="8" cy="8" r="8"/></clipPath></defs><g clip-path="url(#cpB)"><rect width="16" height="16" fill="#cdb88f"/><path d="M0 7 C4 5 6 7 8 4.4 C10 2.6 13 3 16 5.6 V0 H0 Z" fill="#8fb2d6"/><circle cx="8.6" cy="8.6" r="3.2" fill="#ece2cc"/><path d="M2 14 C5 10.6 12 10.6 15 14 V16 H2 Z" fill="#ab9060"/><circle cx="4.4" cy="9.6" r="1.6" fill="#dccfae"/></g></svg>
<svg class="abs" style="left:1246px;top:1072px" width="6" height="3"><use href="#dot"/></svg>
<!-- active chrome -->
<div class="abs" style="left:1274px;top:1037px;width:38px;height:38px;border-radius:5px;background:rgba(255,255,255,.55);border:1px solid rgba(255,255,255,.5)"></div>
<svg class="abs" style="left:1281px;top:1044px" width="24" height="24"><use href="#chrome"/></svg>
<svg class="abs" style="left:1294px;top:1039px" width="16" height="16"><use href="#ava"/></svg>
<div class="abs" style="left:1285px;top:1071px;width:16px;height:3px;border-radius:1.5px;background:#1a73d8"></div>
<!-- tray -->
<svg class="abs" style="left:1759px;top:1052px" width="12" height="8" viewBox="0 0 12 8"><path d="M1 6.6 L6 1.4 L11 6.6" fill="none" stroke="#1b1b1b" stroke-width="1.3"/></svg>
<svg class="abs" style="left:1788px;top:1047px" width="18" height="18" viewBox="0 0 18 18"><path d="M11 12.6 H2 A1.2 1.2 0 0 1 .8 11.4 V2.4 A1.2 1.2 0 0 1 2 1.2 H11" fill="none" stroke="#1b1b1b" stroke-width="1.1"/><path d="M5 16.4 H11.4 M8.2 12.8 V16.4" stroke="#1b1b1b" stroke-width="1.1"/><rect x="12.6" y=".8" width="3.6" height="6.8" rx=".9" fill="none" stroke="#1b1b1b" stroke-width="1.1"/><path d="M14.4 7.6 V14 H11.6" fill="none" stroke="#1b1b1b" stroke-width="1.1"/><circle cx="14.4" cy="3" r=".8" fill="#1b1b1b"/></svg>
<svg class="abs" style="left:1812px;top:1048px" width="18" height="16" viewBox="0 0 18 16"><path d="M1 5.6 H3.6 L7.4 2.2 V13.8 L3.6 10.4 H1 Z" fill="none" stroke="#1b1b1b" stroke-width="1.1" stroke-linejoin="round"/><path d="M9.6 5.4 A3.6 3.6 0 0 1 9.6 10.6" fill="none" stroke="#1b1b1b" stroke-width="1"/><path d="M11.6 3.4 A6.4 6.4 0 0 1 11.6 12.6" fill="none" stroke="#8a8a8a" stroke-width="1"/><path d="M13.6 1.6 A9 9 0 0 1 13.6 14.4" fill="none" stroke="#b0b0b0" stroke-width="1"/></svg>
<div class="tk" style="left:1800px;top:1041.5px;width:100px;text-align:right;font-size:12.5px;letter-spacing:-.05px">12:50 AM</div>
<div class="tk" style="left:1800px;top:1057px;width:100px;text-align:right;font-size:12.5px;letter-spacing:-.05px">12/8/2025</div>
<!--TASK_END-->
</body>
</html>
